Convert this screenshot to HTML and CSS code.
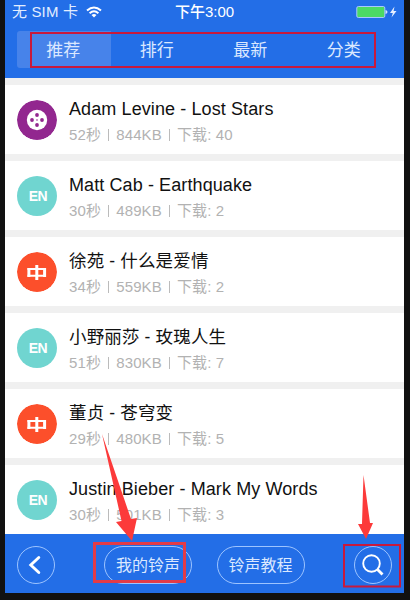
FILE: index.html
```html
<!DOCTYPE html>
<html lang="zh-CN">
<head>
<meta charset="utf-8">
<title>铃声</title>
<link rel="stylesheet" href="styles.css">
</head>
<body>
<main class="screen">
  <header class="header">
    <div class="status">
      <div class="carrier"><span>无 SIM 卡</span>
        <svg class="wifi" viewBox="0 0 16 12"><g fill="none" stroke="#fff" stroke-width="2"><path d="M1 4.6Q8-1.7 15 4.6"/><path d="M3.6 7.2Q8 3.3 12.4 7.2"/></g><path fill="#fff" d="M5.5 9Q8 7 10.5 9L8 11.6z"/></svg>
      </div>
      <div class="clock">下午3:00</div>
      <div class="power">
        <svg width="42" height="14" viewBox="0 0 42 14"><rect x=".8" y="1.5" width="28" height="11" rx="1.5" fill="#4cd964" stroke="#a9c8ff"/><path d="M29.5 5q2 .3 2 2t-2 2z" fill="#d5e4ff"/><path d="M38.5 1.5L34 8h2.8l-1.3 4.5L40.500 6h-2.900z" fill="#e6efff"/></svg>
      </div>
    </div>
    <nav class="tabs"><a class="tab active">推荐</a><a class="tab">排行</a><a class="tab">最新</a><a class="tab">分类</a></nav>
  </header>
  <section class="list">
    <article class="row">
      <svg class="badge" viewBox="0 0 40 40"><circle cx="20" cy="20" r="20" fill="#92278f"/><circle cx="20" cy="20" r="10.200" fill="#fff"/><g fill="#92278f"><circle cx="20" cy="15" r="1.900"/><circle cx="20" cy="25" r="1.900"/><circle cx="15" cy="20" r="1.900"/><circle cx="25" cy="20" r="1.900"/><circle cx="20" cy="20" r=".8"/></g></svg>
      <div class="info"><h2 class="name">Adam Levine - Lost Stars</h2><p class="meta">52秒<i class="bar"></i>844KB<i class="bar"></i>下载: 40</p></div>
    </article>
    <article class="row">
      <div class="badge en">EN</div>
      <div class="info"><h2 class="name">Matt Cab - Earthquake</h2><p class="meta">30秒<i class="bar"></i>489KB<i class="bar"></i>下载: 2</p></div>
    </article>
    <article class="row">
      <svg class="badge" viewBox="0 0 40 40"><circle cx="20" cy="20" r="20" fill="#fc4f2b"/><path d="M10.500 17h18.500M10.500 23.700h18.500" stroke="#fff" stroke-width="2"/><path d="M11.900 16v9M27.600 16v9M19.800 13v15" stroke="#fff" stroke-width="3"/></svg>
      <div class="info"><h2 class="name zh">徐苑 - 什么是爱情</h2><p class="meta">34秒<i class="bar"></i>559KB<i class="bar"></i>下载: 2</p></div>
    </article>
    <article class="row">
      <div class="badge en">EN</div>
      <div class="info"><h2 class="name zh">小野丽莎 - 玫瑰人生</h2><p class="meta">51秒<i class="bar"></i>830KB<i class="bar"></i>下载: 7</p></div>
    </article>
    <article class="row">
      <svg class="badge" viewBox="0 0 40 40"><circle cx="20" cy="20" r="20" fill="#fc4f2b"/><path d="M10.500 17h18.500M10.500 23.700h18.500" stroke="#fff" stroke-width="2"/><path d="M11.900 16v9M27.600 16v9M19.800 13v15" stroke="#fff" stroke-width="3"/></svg>
      <div class="info"><h2 class="name zh">董贞 - 苍穹变</h2><p class="meta">29秒<i class="bar"></i>480KB<i class="bar"></i>下载: 5</p></div>
    </article>
    <article class="row">
      <div class="badge en">EN</div>
      <div class="info"><h2 class="name">Justin Bieber - Mark My Words</h2><p class="meta">30秒<i class="bar"></i>501KB<i class="bar"></i>下载: 3</p></div>
    </article>
  </section>
  <footer class="footer">
    <a class="round"><svg viewBox="0 0 38 38"><path d="M21.800 11.500l-8 7.500 8 7.500" fill="none" stroke="#fff" stroke-width="2.900" stroke-linecap="round"/></svg></a>
    <a class="pill mine">我的铃声</a>
    <a class="pill">铃声教程</a>
    <a class="round search"><svg viewBox="0 0 38 38"><circle cx="17.500" cy="17.500" r="8.300" fill="none" stroke="#fff" stroke-width="1.900"/><path d="M23.500 23.500l5 5" stroke="#fff" stroke-width="2.800"/></svg></a>
  </footer>
</main>
<svg class="marks" viewBox="0 0 410 600">
  <rect x="31" y="33" width="344" height="34" fill="none" stroke="#c8193c" stroke-width="2"/>
  <rect x="94.500" y="543.500" width="90" height="38" fill="none" stroke="#e23b47" stroke-width="3"/>
  <rect x="344" y="545" width="56" height="41.500" fill="none" stroke="#c8193c" stroke-width="2"/>
  <path d="M102 434L131 519 137 518 132 541 116 522 121.500 521z" fill="#fc3a3a"/>
  <path d="M363.500 475L370 523 373 523 366 539 358 524 362 524z" fill="#fc3a3a"/>
</svg>
</body>
</html>
```
FILE: styles.css
```css
* { box-sizing: border-box; }
body {
  margin: 0;
  width: 410px;
  height: 600px;
  overflow: hidden;
  position: relative;
  background: #111;
  font-family: "Liberation Sans", "Noto Sans CJK SC", sans-serif;
}
.screen {
  width: 399px;
  height: 593px;
  margin-left: 5px;
  display: flex;
  flex-direction: column;
  background: #f0f0f0;
}
.header { height: 78px; background: #236ee7; color: #e2edff; }
.status {
  height: 22px;
  display: grid;
  grid-template-columns: 1fr auto 1fr;
  align-items: center;
  font-size: 15px;
  line-height: 23px;
  white-space: nowrap;
}
.carrier { display: flex; align-items: center; gap: 8px; padding-left: 7px; letter-spacing: .15px; }
.wifi { width: 16px; height: 12px; }
.clock { color: #fff; font-weight: 500; }
.power { display: flex; justify-content: flex-end; padding-right: 6px; }
.tabs {
  display: grid;
  grid-template-columns: repeat(4, 93.500px);
  height: 37px;
  margin: 9px 0 0 12px;
}
.tab {
  height: 37px;
  line-height: 39px;
  padding-right: 1px;
  text-align: center;
  font-size: 17px;
  color: #dbe8ff;
}
.active { background: #4783ea; border-radius: 3px 0 0 3px; }
.list { display: flex; flex-direction: column; gap: 7px; padding-top: 7px; height: 456px; }
.row {
  height: 69px;
  flex: none;
  display: flex;
  align-items: center;
  gap: 12px;
  padding-left: 12px;
  background: #fff;
}
.badge { width: 40px; height: 40px; flex: none; border-radius: 50%; }
.en {
  padding-left: 2px;
  background: #70d5d0;
  color: #fff;
  font: bold 14px/41px "Liberation Sans", sans-serif;
  letter-spacing: -.5px;
  text-align: center;
}
.info { white-space: nowrap; padding-top: 3px; }
.name {
  margin: 0;
  height: 26px;
  line-height: 26px;
  font-size: 18px;
  letter-spacing: .1px;
  font-weight: 400;
  color: #111;
}
.zh { font-size: 17.500px; letter-spacing: .15px; }
.meta {
  margin: 0;
  height: 25px;
  line-height: 25px;
  font-size: 15px;
  letter-spacing: .15px;
  color: #b2b2b2;
}
.bar {
  display: inline-block;
  width: 1px;
  height: 12px;
  margin: 0 7px;
  vertical-align: -1px;
  background: #bbb;
}
.footer {
  height: 59px;
  display: flex;
  align-items: center;
  padding: 3px 12px 0;
  background: #236ee7;
}
.round, .pill { height: 38px; border: 1px solid #9dc4ff; border-radius: 19px; }
.round { width: 38px; }
.round svg { display: block; width: 38px; height: 38px; margin: -1px; }
.pill {
  width: 88px;
  margin-right: 24.500px;
  text-align: center;
  line-height: 38px;
  font-size: 16px;
  color: #dbe8ff;
}
.mine { margin-left: 49px; }
.search { margin-left: auto; }
.marks { position: absolute; left: 0; top: 0; width: 410px; height: 600px; }
```
